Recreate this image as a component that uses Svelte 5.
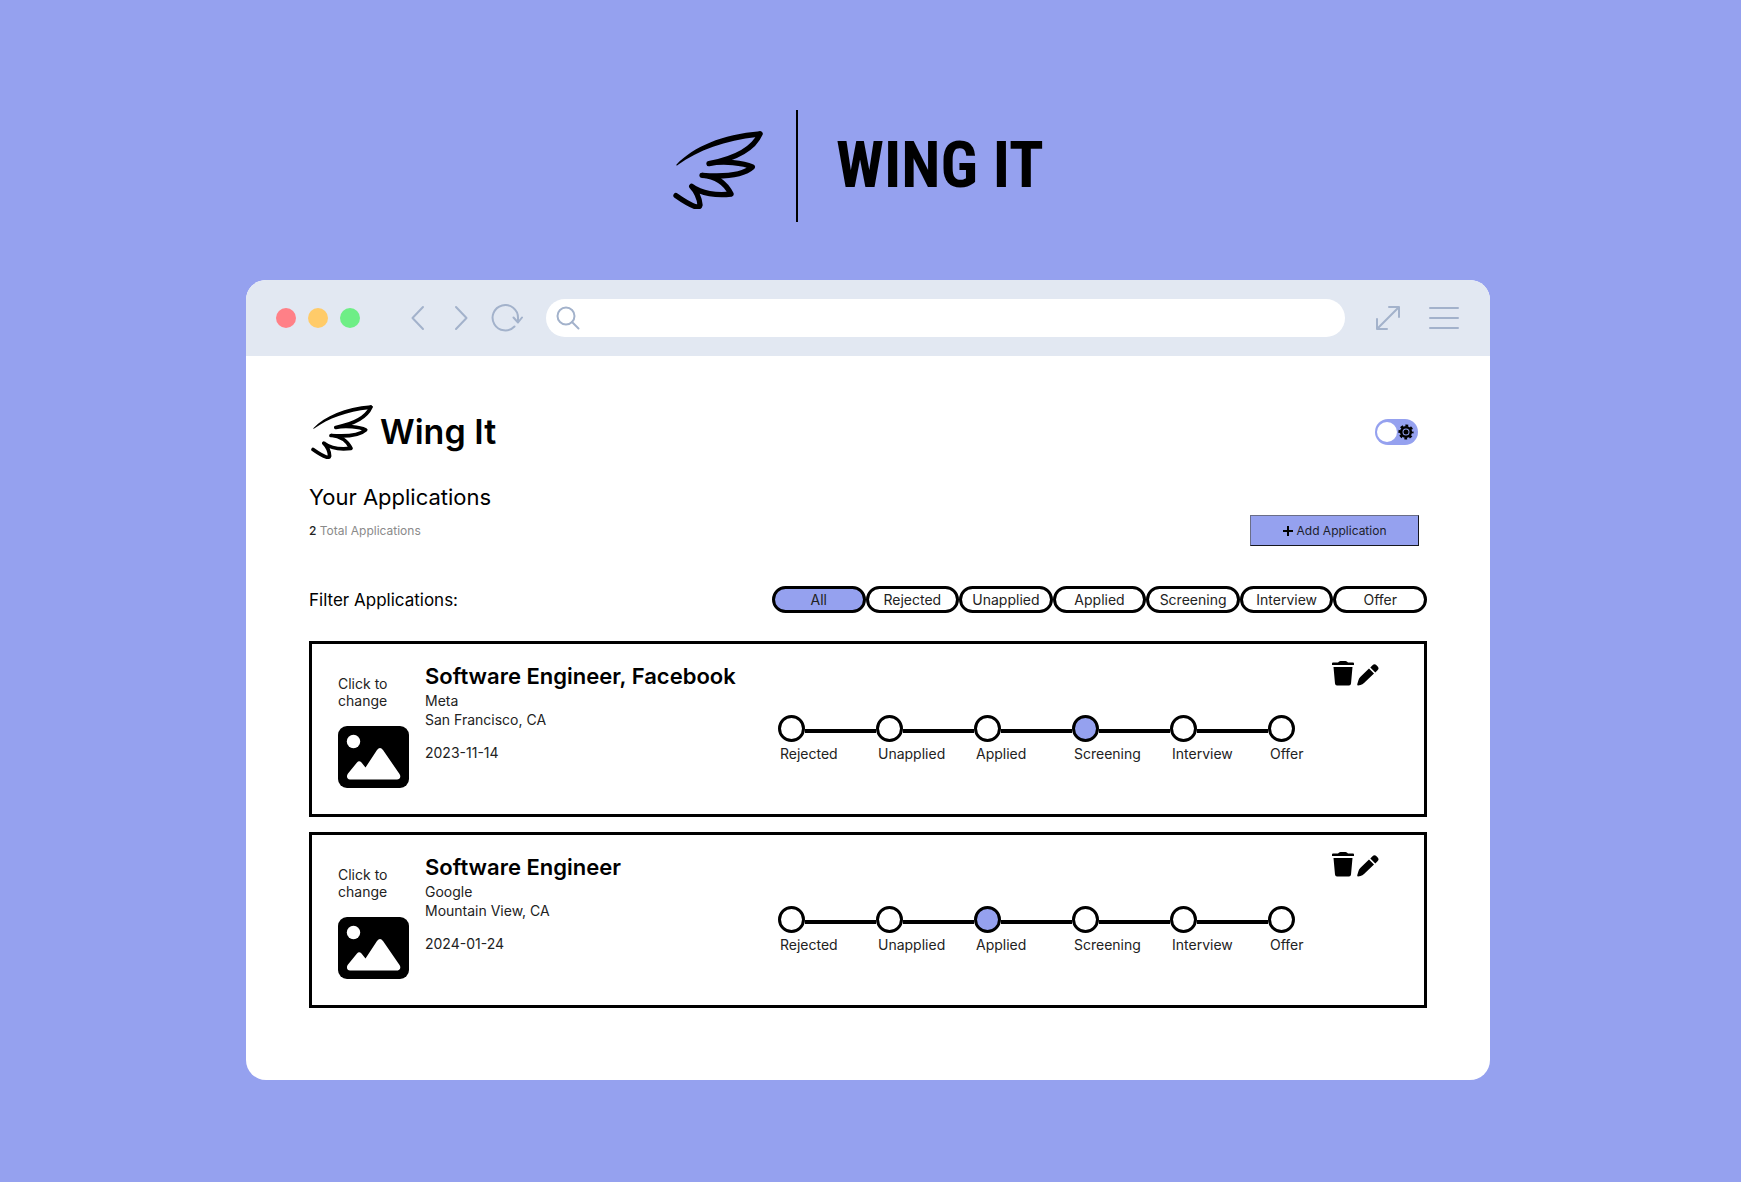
<script>
  const stages = ['Rejected', 'Unapplied', 'Applied', 'Screening', 'Interview', 'Offer'];
  const filters = ['All', ...stages];

  let applications = $state([
    { title: 'Software Engineer, Facebook', company: 'Meta', place: 'San Francisco, CA', date: '2023-11-14', stage: 'Screening' },
    { title: 'Software Engineer', company: 'Google', place: 'Mountain View, CA', date: '2024-01-24', stage: 'Applied' }
  ]);
  let active = $state('All');
  let dark = $state(false);

  const visible = $derived(
    active === 'All' ? applications : applications.filter((a) => a.stage === active)
  );
</script>

{#snippet wing()}
  <svg class="wing" viewBox="38 94 270 236" aria-hidden="true">
    <path d="M48 195C100 142 184 104 299 95Q308 96 306 104L290 112C196 122 112 152 52 196Q48 200 48 195Z" />
    <path
      d="M299 103C282 142 238 174 146 192C190 182 250 190 276 202C250 226 190 232 125 227C168 230 196 250 212 283C170 288 122 282 94 260C106 272 118 296 119 316Q117 324 105 321C84 314 64 300 47 288"
      fill="none" stroke="currentColor" stroke-width="16" stroke-linecap="round" stroke-linejoin="round" />
  </svg>
{/snippet}

<div class="page">
  <header class="banner">
    {@render wing()}
    <span class="rule"></span>
    <p class="banner-name">WING IT</p>
  </header>

  <div class="window">
    <div class="toolbar">
      <span class="light red"></span>
      <span class="light amber"></span>
      <span class="light green"></span>
      <button class="tool back" aria-label="Back">
        <svg width="14" height="26" viewBox="0 0 14 26"><path d="M12 2 1.500 13 12 24" /></svg>
      </button>
      <button class="tool forward" aria-label="Forward">
        <svg width="14" height="26" viewBox="0 0 14 26"><path d="M2 2 12.500 13 2 24" /></svg>
      </button>
      <button class="tool reload" aria-label="Reload">
        <svg width="32" height="28" viewBox="0 0 32 28"><path d="M23.500 22.500A12.700 12.700 0 1 1 27 14V18M22.500 13.500 27 18.500 31 13.500" /></svg>
      </button>
      <label class="address">
        <svg width="24" height="24" viewBox="0 0 24 24"><circle cx="10" cy="10" r="8.500" /><path d="M16 16 22.500 22.500" /></svg>
        <input type="text" aria-label="Address" />
      </label>
      <button class="tool expand" aria-label="Full screen">
        <svg width="26" height="26" viewBox="0 0 26 26"><path d="M2 24 24 2M14 2H24V12M2 14V24H12" /></svg>
      </button>
      <button class="tool menu" aria-label="Menu">
        <svg width="30" height="24" viewBox="0 0 30 24"><path d="M1 2H29M1 12H29M1 22H29" /></svg>
      </button>
    </div>

    <main>
      <div class="brand-row">
        <div class="brand">
          {@render wing()}
          <h1>Wing It</h1>
        </div>
        <label class="toggle">
          <input type="checkbox" aria-label="Dark mode" bind:checked={dark} />
          <span class="knob"></span>
          <svg width="16" height="16" viewBox="0 0 16 16" aria-hidden="true">
            <circle cx="8" cy="8" r="4.800" fill="none" stroke="#000" stroke-width="2.600" />
            <circle cx="8" cy="8" r="2.500" />
            <circle cx="8" cy="8" r="6.500" fill="none" stroke="#000" stroke-width="2.200" stroke-dasharray="2.800 2.305" stroke-dashoffset="1.400" />
          </svg>
        </label>
      </div>

      <h2>Your Applications</h2>
      <div class="summary">
        <p><b>{applications.length}</b> Total Applications</p>
        <button class="add">
          <svg width="10" height="10" viewBox="0 0 10 10" aria-hidden="true"><path d="M5 0V10M0 5H10" /></svg>
          Add Application
        </button>
      </div>

      <div class="filters">
        <p>Filter Applications:</p>
        <div class="pills">
          {#each filters as name}
            <button class:active={active === name} onclick={() => (active = name)}>{name}</button>
          {/each}
        </div>
      </div>

      <div class="cards">
        {#each visible as app}
          <article>
            <button class="thumb">
              <span>Click to change</span>
              <svg width="71" height="62" viewBox="0 0 71 62" aria-hidden="true">
                <rect width="71" height="62" rx="9" />
                <circle cx="15.500" cy="15.500" r="6.700" fill="#fff" />
                <path d="M12 53.500C9 53.500 8 50 10 47.500L19 36.500Q21 34 23.500 36.500L27.500 41.500 39 24Q42 20 45 24L61.500 48C63.500 51 61.500 53.500 59 53.500Z" fill="#fff" />
              </svg>
            </button>
            <div class="details">
              <h3>{app.title}</h3>
              <p>{app.company}</p>
              <p>{app.place}</p>
              <time datetime={app.date}>{app.date}</time>
            </div>
            <ol class="steps">
              {#each stages as stage}
                <li>
                  <div class="track">
                    <button
                      class="dot"
                      class:current={app.stage === stage}
                      aria-label={stage}
                      onclick={() => (app.stage = stage)}
                    ></button>
                    <span class="line"></span>
                  </div>
                  <span class="stage">{stage}</span>
                </li>
              {/each}
            </ol>
            <div class="actions">
              <button aria-label="Delete">
                <svg width="22" height="25" viewBox="0 0 22 25">
                  <path d="M1 1.500H6Q7 0 8.500 0H13.500Q15 0 16 1.500H21Q22 1.500 22 2.500V4H0V2.500Q0 1.500 1 1.500ZM1.500 6H20.500L19 22.500Q18.800 24.500 17 24.500H5Q3.200 24.500 3 22.500Z" />
                </svg>
              </button>
              <button aria-label="Edit">
                <svg width="22" height="22" viewBox="0 0 22 22">
                  <path d="M12 4.500 17 9.500 7 19Q5.500 20.500 3.500 21L1 21.500Q0 21.500 .300 20L1.500 16Q2 14 3.500 12.800ZM13.300 3.400 15.500 1.200Q17.500-.800 19.500 1.200L20.700 2.500Q22.500 4.500 20.500 6.300L18.300 8.400Z" />
                </svg>
              </button>
            </div>
          </article>
        {/each}
      </div>
    </main>
  </div>
</div>

<style>
  :global(body) {
    background: #95a1ef;
    color: #000;
    font-family: Inter, 'Open Sans', sans-serif;
  }
  :global(#app *) {
    box-sizing: border-box;
  }
  h1, h2, h3, p, ol {
    margin: 0;
    padding: 0;
    font-weight: 400;
  }
  button {
    padding: 0;
    border: 0;
    background: none;
    color: inherit;
    font: inherit;
    cursor: pointer;
  }
  svg {
    display: block;
    flex: none;
  }
  .page {
    display: flex;
    flex-direction: column;
    align-items: center;
    padding: 110px 29px 103px 24px;
  }
  .banner {
    display: flex;
    align-items: center;
    width: 390px;
    margin-bottom: 58px;
  }
  .banner .wing {
    width: 90px;
    margin-top: 8px;
  }
  .rule {
    flex: none;
    width: 2px;
    height: 112px;
    margin: 0 38px 0 33px;
    background: #000;
  }
  .banner-name {
    font: 700 64px/72px 'Roboto Condensed', 'Open Sans Condensed', 'Noto Sans Condensed', 'DejaVu Sans Condensed', sans-serif;
    white-space: nowrap;
  }
  .window {
    width: 100%;
    max-width: 1244px;
    overflow: hidden;
    border-radius: 20px;
    background: #fff;
  }
  .toolbar {
    display: flex;
    align-items: center;
    height: 76px;
    padding: 0 31px 0 30px;
    background: #e2e8f2;
  }
  .light {
    width: 20px;
    height: 20px;
    margin-right: 12px;
    border-radius: 50%;
  }
  .red { background: #ff8087; }
  .amber { background: #ffcb69; }
  .green { background: #6eee86; }
  .toolbar svg {
    fill: none;
    stroke: #a3b2cb;
    stroke-width: 2;
    stroke-linecap: round;
    stroke-linejoin: round;
  }
  .back { margin-left: 39px; }
  .forward { margin-left: 29px; }
  .reload { margin: 0 23px; }
  .address {
    display: flex;
    flex: 1;
    align-items: center;
    gap: 8px;
    height: 38px;
    padding: 0 20px 0 10px;
    border-radius: 19px;
    background: #fff;
  }
  .address input {
    flex: 1;
    border: 0;
    outline: 0;
    background: none;
    font: inherit;
  }
  .expand { margin-left: 30px; }
  .menu { margin-left: 28px; }

  main {
    padding: 49px 63px 72px;
  }
  .brand-row {
    display: flex;
    align-items: center;
    justify-content: space-between;
    height: 54px;
    padding-right: 9px;
  }
  .brand {
    display: flex;
    align-items: center;
    gap: 7px;
    padding-left: 2px;
  }
  .brand .wing {
    width: 62px;
  }
  h1 {
    font-size: 34px;
    line-height: 44px;
    font-weight: 600;
  }
  .toggle {
    display: flex;
    align-items: center;
    justify-content: space-between;
    width: 43px;
    height: 26px;
    padding: 0 4px 0 2px;
    border-radius: 13px;
    background: #95a1ef;
    cursor: pointer;
  }
  .toggle input {
    position: absolute;
    opacity: 0;
  }
  .knob {
    width: 20px;
    height: 20px;
    border-radius: 50%;
    background: #fff;
  }
  .toggle input:checked ~ .knob {
    order: 2;
  }
  h2 {
    margin-top: 24px;
    font-size: 22px;
    line-height: 28px;
  }
  .summary {
    display: flex;
    align-items: center;
    justify-content: space-between;
    margin-top: 4px;
    padding-right: 8px;
    color: #8a8a8a;
    font-size: 12px;
  }
  .summary b {
    color: #222;
    font-weight: 500;
  }
  .add {
    display: flex;
    align-items: center;
    justify-content: center;
    gap: 4px;
    width: 169px;
    height: 31px;
    border: 1px solid;
    border-color: #6a6e88 #15161f #15161f #6a6e88;
    background: #95a1ef;
    color: #1c1e2c;
  }
  .add path {
    stroke: #000;
    stroke-width: 2;
  }
  .filters {
    display: flex;
    align-items: center;
    justify-content: space-between;
    margin-top: 40px;
    font-size: 17px;
    line-height: 24px;
  }
  .pills {
    display: grid;
    grid-template-columns: repeat(7, 1fr);
    width: 655px;
  }
  .pills button {
    height: 27px;
    border: 3px solid #000;
    border-radius: 14px;
    color: #222;
    font-size: 14px;
    line-height: 20px;
  }
  .pills .active {
    background: #95a1ef;
  }
  .cards {
    display: grid;
    gap: 15px;
    margin-top: 28px;
  }
  article {
    display: flex;
    align-items: flex-start;
    min-height: 176px;
    padding: 0 45px 0 26px;
    border: 3px solid #000;
    color: #222;
    font-size: 14px;
    line-height: 19px;
  }
  .thumb {
    width: 71px;
    margin: 31px 16px 0 0;
    line-height: 17px;
    text-align: left;
  }
  .thumb span {
    display: block;
    width: 60px;
  }
  .thumb svg {
    margin-top: 17px;
    fill: #000;
  }
  .details {
    flex: 1;
    padding-top: 18px;
  }
  h3 {
    color: #000;
    font-size: 22px;
    line-height: 29px;
    font-weight: 600;
  }
  time {
    display: block;
    margin-top: 14px;
  }
  .steps {
    display: flex;
    margin-top: 71px;
    list-style: none;
  }
  li {
    width: 98px;
  }
  li:last-child {
    width: 40px;
  }
  li:last-child .line {
    display: none;
  }
  .track {
    display: flex;
    align-items: center;
  }
  .dot {
    width: 27px;
    height: 27px;
    border: 3px solid #000;
    border-radius: 50%;
    background: #fff;
  }
  .current {
    background: #95a1ef;
  }
  .line {
    flex: 1;
    height: 4px;
    margin-top: 4px;
    background: #000;
  }
  .stage {
    display: block;
    margin-top: 2px;
    padding-left: 2px;
  }
  .actions {
    display: flex;
    align-items: flex-end;
    gap: 3px;
    margin: 17px 0 0 24px;
    fill: #000;
  }
</style>
